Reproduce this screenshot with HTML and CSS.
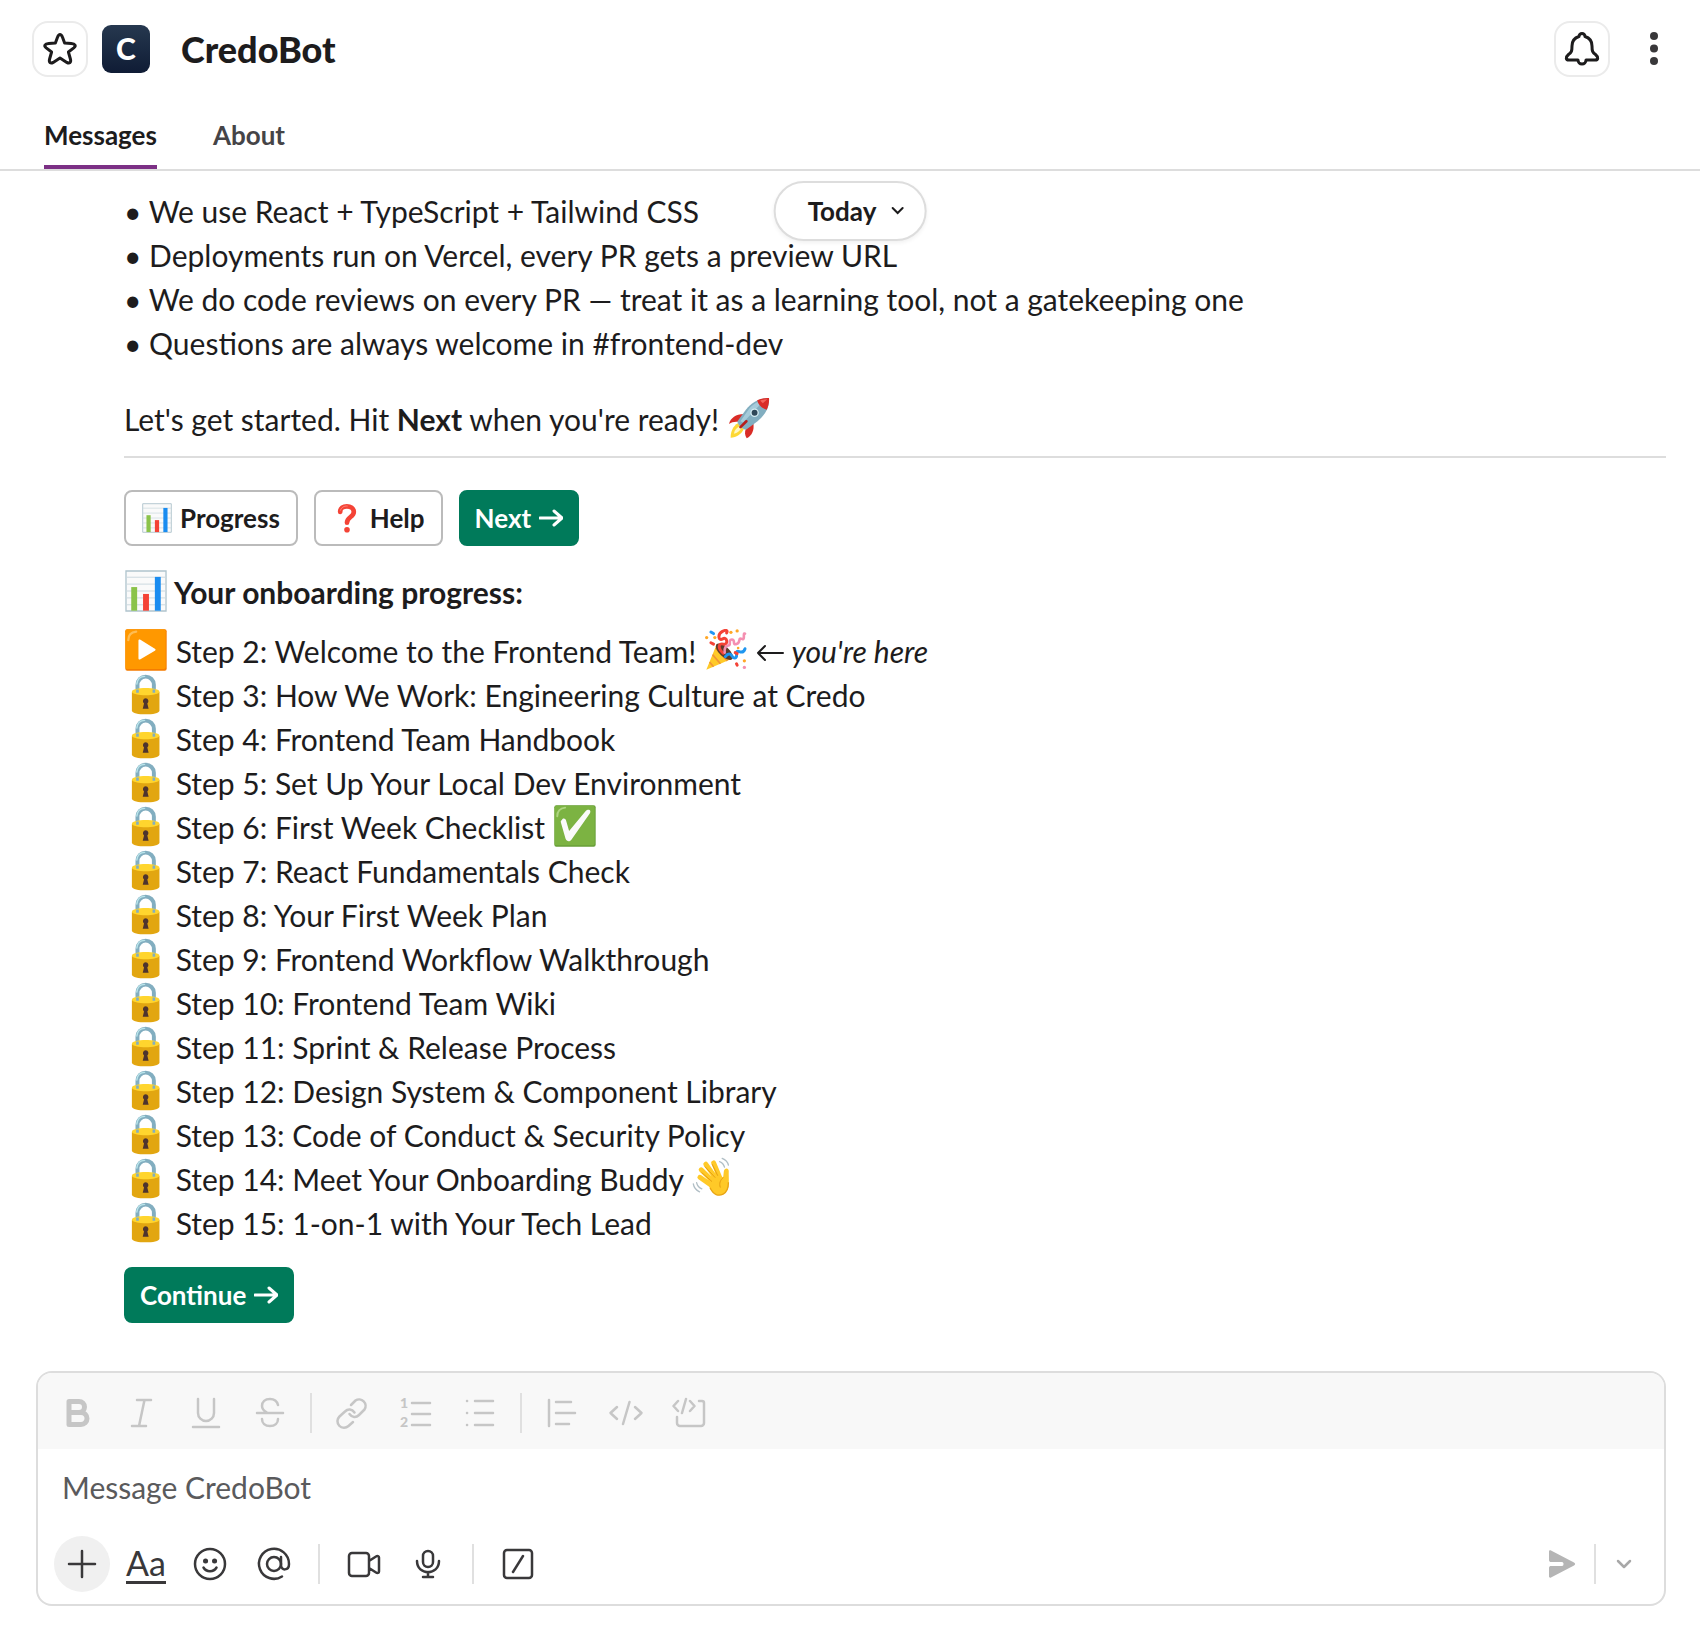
FILE: index.html
```html
<!doctype html>
<html lang="en">
    <head>
        <meta charset="UTF-8" />
        <title>CredoBot</title>
        <link rel="stylesheet" href="styles.css">
    </head>
    <body>
        <!-- Emoji used in the messages -->
        <svg class="sprite" aria-hidden="true">
            <symbol id="lock" viewBox="0 0 128 128">
                <path d="M38 62V36a25 25 0 0 1 50 0v26" fill="none" stroke="#82aec0" stroke-width="12" />
                <path d="M36 34C38 16 50 10 60 10" fill="none" stroke="#b9e4ea" stroke-width="4" stroke-linecap="round" />
                <path d="M21 58v56c0 16 84 16 84 0V58z" fill="#e2a610" />
                <path d="M21 57c0-15 84-15 84 0 0 14-84 14-84 0z" fill="#ffd52e" />
                <path d="M34 50h8v10h-8zM84 50h8v10h-8z" fill="#82aec0" />
                <path d="M63 77a9 9 0 0 0-5 16l-4 16h18l-4-16a9 9 0 0 0-5-16z" fill="#4e342e" />
            </symbol>
            <symbol id="play" viewBox="0 0 128 128">
                <rect x="1" y="1" width="126" height="126" rx="6" fill="#f57c00" />
                <rect x="1" y="1" width="123" height="121" rx="6" fill="#ff9800" />
                <path d="M10 34C10 18 18 10 34 8" fill="none" stroke="#ffbd52" stroke-width="7" stroke-linecap="round" />
                <path d="M41 36c0-4 3-5 6-3l44 27c3 2 3 4 0 6L47 92c-3 2-6 1-6-3z" fill="#fff" />
            </symbol>
            <symbol id="check" viewBox="0 0 128 128">
                <rect x="1" y="1" width="126" height="126" rx="6" fill="#689f38" />
                <rect x="2" y="2" width="122" height="121" rx="6" fill="#7cb342" />
                <path d="M10 34C10 18 18 10 34 8" fill="none" stroke="#aed581" stroke-width="6" stroke-linecap="round" />
                <path d="M24 46c4-8 11-5 13 2l9 31 50-60c9-9 19-3 13 7L54 104c-6 9-15 8-19-2L21 53c-1-3 0-5 3-7z" fill="#fafafa" />
            </symbol>
            <symbol id="chart" viewBox="0 0 128 128">
                <path d="M3 3h122v122H3z" fill="#fafafa" stroke="#b0c4cd" stroke-width="4" />
                <path d="M3 22h122M3 43h122M3 64h122M3 85h122M3 106h122" stroke="#cbd8de" stroke-width="3" />
                <path d="M19 52h18v72H19z" fill="#8bc34a" />
                <path d="M55 73h18v51H55z" fill="#f44336" />
                <path d="M91 21h18v103H91z" fill="#1a8cf0" />
            </symbol>
            <symbol id="question" viewBox="0 0 128 128">
                <path d="M35 38C33 6 93 6 93 38c0 22-29 22-29 46" fill="none" stroke="#f44336" stroke-width="20" stroke-linecap="round" />
                <path d="M36 31c5-14 17-19 29-18" fill="none" stroke="#ff8a80" stroke-width="4" stroke-linecap="round" />
                <circle cx="64" cy="114" r="12" fill="#f44336" />
            </symbol>
            <symbol id="rocket" viewBox="0 0 128 128">
                <path d="M8 124c0-20 8-36 22-44l18 18c-8 16-22 24-40 26z" fill="#fdd835" />
                <path d="M18 112c2-12 8-18 16-22l6 6c-4 8-12 14-22 16z" fill="#fff8c4" />
                <path d="M3 82c5-18 21-30 45-30L34 76c-12-2-22 0-31 6z" fill="#d92c27" />
                <path d="M57 126c-6-10-7-20-2-30l22-18c4 24-4 40-20 48z" fill="#d92c27" />
                <path d="M124 4C98 2 74 14 55 38L29 74c-2 8 18 28 27 25l34-25c24-20 38-44 34-70z" fill="#82aec0" />
                <path d="M110 10C88 14 72 24 60 42L38 74l8 4z" fill="#a5cbda" />
                <path d="M125 3c-13-1-25 2-36 7 3 14 15 26 29 29 6-13 8-25 7-36z" fill="#d92c27" />
                <path d="M120 7c-9 0-16 1-22 4 3 4 5 6 8 8z" fill="#f4655c" />
                <circle cx="81" cy="48" r="13" fill="#d5edf3" />
                <circle cx="81" cy="48" r="9" fill="#2f4858" />
                <path d="M38 92l18-18" stroke="#b71c1c" stroke-width="8" stroke-linecap="round" />
            </symbol>
            <symbol id="popper" viewBox="0 0 128 128">
                <path d="M4 124L36 46c10 12 24 34 48 44z" fill="#ffca28" />
                <path d="M14 101l12 14M23 78l24 28M32 58l36 39" stroke="#f19534" stroke-width="5" />
                <ellipse cx="59" cy="69" rx="33" ry="15" fill="#5d3b2b" transform="rotate(43 59 69)" />
                <path d="M56 74C38 58 40 42 56 46s12-24-2-16-16-14-2-22 18-2 14 4" fill="none" stroke="#f44336" stroke-width="9" stroke-linecap="round" />
                <path d="M60 72c-2-14 4-22 12-22s-2-18 10-18 0 18 14 14 4-22 16-16 2-20 10-16" fill="none" stroke="#f48fb1" stroke-width="8" stroke-linecap="round" />
                <path d="M62 84c8-10 16-10 20-2s16 10 14-4 4-10 12-8 12-4 14-10" fill="none" stroke="#1e96f0" stroke-width="9" stroke-linecap="round" />
                <path d="M18 9l8 5" stroke="#2196f3" stroke-width="9" stroke-linecap="round" />
                <g fill="#ffa726">
                    <circle cx="5" cy="26" r="5" />
                    <circle cx="30" cy="26" r="5" />
                    <circle cx="79" cy="10" r="5" />
                    <circle cx="98" cy="6" r="5" />
                    <circle cx="101" cy="58" r="4" />
                    <circle cx="120" cy="97" r="5" />
                </g>
                <path d="M18 42l8 4M96 106l2 4M92 72l6 3" stroke="#f44336" stroke-width="9" stroke-linecap="round" />
                <circle cx="120" cy="117" r="5" fill="#f48fb1" />
            </symbol>
            <symbol id="wave" viewBox="0 0 128 128">
                <g fill="none" stroke="#b0bec5" stroke-width="4" stroke-linecap="round">
                    <path d="M84 14c8 3 13 9 15 17M92 4c10 4 17 11 19 21M14 78c2 9 8 16 16 19M4 82c2 12 10 20 19 24" />
                </g>
                <path d="M50 84c10 30 30 38 46 29 22-12 15-45 16-70 0-12-14-10-15 1l-2 18-30-12z" fill="#ffc928" />
                <path d="M86 66L66 18M78 72L42 22M70 80L28 39M64 90L24 62" stroke="#ffc928" stroke-width="15" stroke-linecap="round" />
                <path d="M78 56L62 23M70 62L40 30M60 74L30 48M86 92c-4-12 0-22 9-29" fill="none" stroke="#e59c10" stroke-width="3" stroke-linecap="round" />
                <path d="M55 94c10 22 26 26 40 19 12-6 16-20 16-36" fill="none" stroke="#e8a414" stroke-width="4" />
            </symbol>
        </svg>

        <header class="header">
            <button class="icon-box" aria-label="Star">
                <svg viewBox="0 0 36 36"><path d="M18 3.500c1.500 0 2 1.500 2.600 3l2 5.500 6.600.5c4 .3 5.200 2.200 2.600 4.400l-5.400 4.100 2 7c1 3.600-1 5-3.600 3.400L18 27l-6.800 4.400c-2.600 1.600-4.600.2-3.600-3.400l2-7-5.400-4.100c-2.600-2.200-1.400-4.100 2.600-4.400l6.600-.5 2-5.500c.6-1.500 1.100-3 2.600-3z" /></svg>
            </button>
            <span class="avatar">C</span>
            <h1>CredoBot</h1>
            <button class="icon-box" aria-label="Notifications">
                <svg viewBox="0 0 36 36"><path d="M15 5.500a3 3 0 0 1 6 0c5 1.500 7 5 7 9.500 0 5 .5 6.500 3.500 8.500 3.500 3 2.500 5.500-.5 5.500h-9a4 4 0 0 1-8 0H5c-3 0-4-2.500-.5-5.500C7.500 21.500 8 20 8 15c0-4.500 2-8 7-9.500z" /></svg>
            </button>
            <button class="more" aria-label="More actions">
                <svg viewBox="0 0 12 36"><circle cx="6" cy="5" r="4" /><circle cx="6" cy="17.500" r="4" /><circle cx="6" cy="30" r="4" /></svg>
            </button>
        </header>

        <nav class="tabs">
            <a class="tab active" href="#messages">Messages</a>
            <a class="tab" href="#about">About</a>
        </nav>

        <main class="messages" id="messages">
            <button class="date-pill">
                Today
                <svg viewBox="0 0 14 14"><path d="M2 4l5 5 5-5" /></svg>
            </button>

            <p>
                • We use React + TypeScript + Tailwind CSS<br>
                • Deployments run on Vercel, every PR gets a preview URL<br>
                • We do code reviews on every PR — treat it as a learning tool, not a gatekeeping one<br>
                • Questions are always welcome in #frontend-dev
            </p>
            <p class="start">Let's get started. Hit <b>Next</b> when you're ready! <svg class="emoji"><use href="#rocket" /></svg></p>
            <hr>
            <div class="actions">
                <button class="btn"><svg class="emoji"><use href="#chart" /></svg> Progress</button>
                <button class="btn"><svg class="emoji"><use href="#question" /></svg> Help</button>
                <button class="btn primary">Next <svg class="arrow" viewBox="0 0 24 20"><path d="M1 10h22M15 3l8 7-8 7" /></svg></button>
            </div>

            <h2><svg class="emoji"><use href="#chart" /></svg> Your onboarding progress:</h2>
            <ul class="steps">
                <li><svg class="emoji"><use href="#play" /></svg> Step 2: Welcome to the Frontend Team! <svg class="emoji"><use href="#popper" /></svg> <svg class="arrow" viewBox="0 0 28 20"><path d="M27 10H2M9 3l-7 7 7 7" /></svg> <em>you're here</em></li>
                <li><svg class="emoji"><use href="#lock" /></svg> Step 3: How We Work: Engineering Culture at Credo</li>
                <li><svg class="emoji"><use href="#lock" /></svg> Step 4: Frontend Team Handbook</li>
                <li><svg class="emoji"><use href="#lock" /></svg> Step 5: Set Up Your Local Dev Environment</li>
                <li><svg class="emoji"><use href="#lock" /></svg> Step 6: First Week Checklist <svg class="emoji"><use href="#check" /></svg></li>
                <li><svg class="emoji"><use href="#lock" /></svg> Step 7: React Fundamentals Check</li>
                <li><svg class="emoji"><use href="#lock" /></svg> Step 8: Your First Week Plan</li>
                <li><svg class="emoji"><use href="#lock" /></svg> Step 9: Frontend Workflow Walkthrough</li>
                <li><svg class="emoji"><use href="#lock" /></svg> Step 10: Frontend Team Wiki</li>
                <li><svg class="emoji"><use href="#lock" /></svg> Step 11: Sprint &amp; Release Process</li>
                <li><svg class="emoji"><use href="#lock" /></svg> Step 12: Design System &amp; Component Library</li>
                <li><svg class="emoji"><use href="#lock" /></svg> Step 13: Code of Conduct &amp; Security Policy</li>
                <li><svg class="emoji"><use href="#lock" /></svg> Step 14: Meet Your Onboarding Buddy <svg class="emoji"><use href="#wave" /></svg></li>
                <li><svg class="emoji"><use href="#lock" /></svg> Step 15: 1-on-1 with Your Tech Lead</li>
            </ul>
            <button class="btn primary">Continue <svg class="arrow" viewBox="0 0 24 20"><path d="M1 10h22M15 3l8 7-8 7" /></svg></button>
        </main>

        <form class="composer">
            <div class="toolbar format">
                <button type="button" class="tool" aria-label="Bold"><svg viewBox="0 0 36 36"><path stroke-width="5" d="M9 6.500h10a5.500 5.500 0 0 1 0 11H9zM9 17.500h12a6 6 0 0 1 0 12H9z" /></svg></button>
                <button type="button" class="tool" aria-label="Italic"><svg viewBox="0 0 36 36"><path d="M13 5h14M8 31h14M20.500 5l-5.500 26" /></svg></button>
                <button type="button" class="tool" aria-label="Underline"><svg viewBox="0 0 36 36"><path d="M10 4v14a8 8 0 0 0 16 0V4M5 32h26" /></svg></button>
                <button type="button" class="tool" aria-label="Strikethrough"><svg viewBox="0 0 36 36"><path d="M5 18h26M26 10c-1-4-4-6-8-6-5 0-8 3-8 7 0 3 2 5 5 6.500M10 24c0 4 3 7 8 7s8-3 8-7" /></svg></button>
                <span class="sep"></span>
                <button type="button" class="tool" aria-label="Link"><svg viewBox="0 0 36 36"><path d="M17 10l4.500-4.500a6.500 6.500 0 0 1 9 9L25 20c-3 3-7 2.500-9.500-1M19 27l-4.500 4a6.500 6.500 0 0 1-9-9.500L11 16.500c3-3 7-2.500 9.500 1" /></svg></button>
                <button type="button" class="tool" aria-label="Ordered list"><svg viewBox="0 0 36 36"><text x="2" y="13">1</text><text x="2" y="32">2</text><path d="M14 8h18M14 19h18M14 30h18" /></svg></button>
                <button type="button" class="tool" aria-label="Bulleted list"><svg viewBox="0 0 36 36"><path d="M5 6h.1M5 18h.1M5 30h.1M13 6h18M13 18h18M13 30h18" /></svg></button>
                <span class="sep"></span>
                <button type="button" class="tool" aria-label="Blockquote"><svg viewBox="0 0 36 36"><path d="M5 5v26M12 7h15M12 18h19M12 29h13" /></svg></button>
                <button type="button" class="tool" aria-label="Code"><svg viewBox="0 0 36 36"><path d="M9 12l-6.500 6L9 24M27 12l6.500 6L27 24M21.500 7l-6.500 22" /></svg></button>
                <button type="button" class="tool" aria-label="Code block"><svg viewBox="0 0 36 36"><path d="M6 6l-4.500 5L6 16M18 6l4.500 5-4.500 5M14 4l-4 14M27 6h3a2 2 0 0 1 2 2v20a3 3 0 0 1-3 3H8a3 3 0 0 1-3-3v-6" /></svg></button>
            </div>
            <input class="message-input" type="text" aria-label="Message CredoBot" placeholder="Message CredoBot">
            <div class="toolbar">
                <button type="button" class="tool attach" aria-label="Attach"><svg viewBox="0 0 36 36"><path d="M18 5v26M5 18h26" /></svg></button>
                <button type="button" class="tool" aria-label="Formatting"><span class="aa">Aa</span></button>
                <button type="button" class="tool" aria-label="Emoji"><svg viewBox="0 0 36 36"><circle cx="18" cy="18" r="15" /><path d="M11.500 21.500c3 5 10 5 13 0" /><path stroke-width="5" d="M13.500 15h.1M22.500 15h.1" /></svg></button>
                <button type="button" class="tool" aria-label="Mention"><svg viewBox="0 0 36 36"><circle cx="18" cy="18" r="7" /><path d="M25 11v8c0 6 8 6 8-1a15 15 0 1 0-7 12.500" /></svg></button>
                <span class="sep"></span>
                <button type="button" class="tool" aria-label="Video clip"><svg viewBox="0 0 36 36"><path d="M6 7h14a3 3 0 0 1 3 3v17a3 3 0 0 1-3 3H6a3 3 0 0 1-3-3V10a3 3 0 0 1 3-3zM23 15l7-4.500c1.500-1 3-.5 3 1v14c0 1.500-1.500 2-3 1L23 22" /></svg></button>
                <button type="button" class="tool" aria-label="Audio clip"><svg viewBox="0 0 36 36"><rect x="13" y="5" width="10" height="16" rx="5" /><path d="M7 15c0 15 22 15 22 0M18 26v5M13 31h10" /></svg></button>
                <span class="sep"></span>
                <button type="button" class="tool" aria-label="Shortcuts"><svg viewBox="0 0 36 36"><rect x="4" y="4" width="28" height="28" rx="3" /><path d="M23 10l-10 16" /></svg></button>
                <button class="tool send" aria-label="Send"><svg viewBox="0 0 36 36"><path d="M5 5.500c0-1 1-1.500 2-1l23 12c1.500.8 1.500 2.200 0 3l-23 12c-1 .5-2 0-2-1V22c0-1.500 1-2 2-2h11c2 0 2-4 0-4H7c-1 0-2-.5-2-2z" /></svg></button>
                <span class="sep"></span>
                <button type="button" class="tool options" aria-label="Schedule"><svg viewBox="0 0 36 36"><path d="M12 15l6 6 6-6" /></svg></button>
            </div>
        </form>
    </body>
</html>
```

FILE: styles.css
```css
:root {
    --color-text: #1d1c1d;
    --color-muted: #454447;
    --color-border: #dddddd;
    --color-green: #007a5a;
    --color-purple: #7c3085;
}

* {
    box-sizing: border-box;
}

body {
    display: flex;
    flex-direction: column;
    min-height: 100vh;
    margin: 0;
    background: #fff;
    color: var(--color-text);
    font-family: Lato, "Open Sans", sans-serif;
    font-size: 30px;
    line-height: 44px;
}

button {
    padding: 0;
    border: none;
    background: none;
    color: inherit;
    font: inherit;
    cursor: pointer;
}

h1,
h2,
p,
ul {
    margin: 0;
    padding: 0;
}

.sprite {
    position: absolute;
    width: 0;
    height: 0;
}

/* Header */
.header {
    display: flex;
    align-items: center;
    gap: 14px;
    padding: 21px 40px 0 32px;
}

.header h1 {
    flex: 1;
    margin-left: 17px;
    font-size: 36px;
    font-weight: 900;
}

.icon-box {
    display: flex;
    align-items: center;
    justify-content: center;
    width: 56px;
    height: 56px;
    border: 2px solid #ebebeb;
    border-radius: 16px;
}

.icon-box svg {
    width: 36px;
    height: 36px;
    fill: none;
    stroke: var(--color-text);
    stroke-width: 3;
    stroke-linejoin: round;
}

.avatar {
    width: 48px;
    height: 48px;
    border-radius: 9px;
    background: linear-gradient(#26384f, #0f1c35);
    color: #fff;
    font-size: 30px;
    font-weight: 900;
    line-height: 46px;
    text-align: center;
}

.more {
    display: flex;
    margin-left: 24px;
}

.more svg {
    width: 12px;
    height: 36px;
    fill: #39383a;
}

/* Tabs */
.tabs {
    display: flex;
    gap: 56px;
    padding: 36px 44px 0;
    border-bottom: 2px solid var(--color-border);
}

.tab {
    height: 56px;
    color: var(--color-muted);
    font-size: 26px;
    font-weight: 700;
    text-decoration: none;
}

.tab.active {
    border-bottom: 4px solid var(--color-purple);
    color: var(--color-text);
}

/* Messages */
.messages {
    position: relative;
    flex: 1;
    padding: 18px 34px 40px 124px;
}

.date-pill {
    position: absolute;
    top: 10px;
    left: 50%;
    display: flex;
    align-items: center;
    gap: 14px;
    height: 60px;
    padding: 0 20px 0 32px;
    transform: translateX(-50%);
    border: 2px solid var(--color-border);
    border-radius: 30px;
    background: #fff;
    box-shadow: 0 2px 4px rgba(0, 0, 0, 0.06);
    font-size: 26px;
    font-weight: 700;
}

.date-pill svg {
    width: 14px;
    height: 14px;
    fill: none;
    stroke: var(--color-text);
    stroke-width: 2;
    stroke-linecap: round;
}

.emoji {
    width: 42px;
    height: 42px;
    margin: 0 1px;
    vertical-align: top;
}

.arrow {
    width: 28px;
    height: 20px;
    fill: none;
    stroke: currentColor;
    stroke-width: 2;
    stroke-linecap: round;
    stroke-linejoin: round;
}

.start {
    margin-top: 32px;
}

hr {
    height: 2px;
    margin: 15px 0 32px;
    border: none;
    background: var(--color-border);
}

.actions {
    display: flex;
    gap: 16px;
    margin-bottom: 24px;
}

.btn {
    display: inline-flex;
    align-items: center;
    gap: 8px;
    height: 56px;
    padding: 0 16px;
    border: 2px solid #bbb;
    border-radius: 8px;
    font-size: 26px;
    font-weight: 700;
}

.btn .emoji {
    width: 30px;
    height: 30px;
    margin: 0;
}

.btn .arrow {
    width: 24px;
    stroke-width: 3;
}

.btn.primary {
    padding: 0 14px;
    border-color: var(--color-green);
    background: var(--color-green);
    color: #fff;
}

h2 {
    margin-bottom: 15px;
    font-size: 30px;
    font-weight: 700;
}

.steps {
    margin-bottom: 22px;
    list-style: none;
}

/* Composer */
.composer {
    margin: 0 34px 44px 36px;
    border: 2px solid var(--color-border);
    border-radius: 16px;
}

.toolbar {
    display: flex;
    align-items: center;
    gap: 8px;
    padding: 11px 20px 12px 16px;
    color: #39383a;
}

.format {
    height: 76px;
    padding: 4px 12px 0;
    border-radius: 14px 14px 0 0;
    background: #f8f8f8;
    color: #c6c6c6;
}

.tool {
    display: flex;
    align-items: center;
    justify-content: center;
    width: 56px;
    height: 56px;
}

.tool svg {
    width: 36px;
    height: 36px;
    fill: none;
    stroke: currentColor;
    stroke-width: 2.5;
    stroke-linecap: round;
    stroke-linejoin: round;
}

.tool text {
    fill: currentColor;
    stroke: none;
    font-size: 14px;
    font-weight: 900;
}

.sep {
    width: 2px;
    height: 40px;
    margin: 0 8px;
    background: #e0e0e0;
}

.format .sep {
    margin: 0 4px;
}

.attach {
    border-radius: 50%;
    background: #f0f0f0;
}

.aa {
    border-bottom: 3px solid;
    font-size: 34px;
    line-height: 36px;
}

.message-input {
    width: 100%;
    height: 76px;
    padding: 0 24px;
    border: none;
    outline: none;
    background: none;
    font: inherit;
}

.message-input::placeholder {
    color: #5a5a5c;
}

.send {
    width: 48px;
    margin-left: auto;
    color: #b5b5b5;
}

.send svg {
    fill: currentColor;
    stroke: none;
}

.send + .sep {
    margin: 0;
}

.options {
    width: 40px;
    color: #a8a8a8;
}
```
